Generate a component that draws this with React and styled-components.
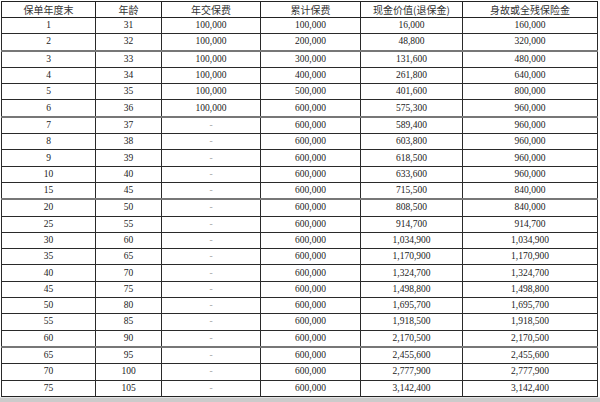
import React from "react";
import styled, { createGlobalStyle } from "styled-components";

const GlobalStyle = createGlobalStyle`
  html, body {
    margin: 0;
    padding: 0;
    background: #fff;
  }
`;

const rows = [
  [1, 31, "100,000", "100,000", "16,000", "160,000"],
  [2, 32, "100,000", "200,000", "48,800", "320,000"],
  [3, 33, "100,000", "300,000", "131,600", "480,000"],
  [4, 34, "100,000", "400,000", "261,800", "640,000"],
  [5, 35, "100,000", "500,000", "401,600", "800,000"],
  [6, 36, "100,000", "600,000", "575,300", "960,000"],
  [7, 37, "-", "600,000", "589,400", "960,000"],
  [8, 38, "-", "600,000", "603,800", "960,000"],
  [9, 39, "-", "600,000", "618,500", "960,000"],
  [10, 40, "-", "600,000", "633,600", "960,000"],
  [15, 45, "-", "600,000", "715,500", "840,000"],
  [20, 50, "-", "600,000", "808,500", "840,000"],
  [25, 55, "-", "600,000", "914,700", "914,700"],
  [30, 60, "-", "600,000", "1,034,900", "1,034,900"],
  [35, 65, "-", "600,000", "1,170,900", "1,170,900"],
  [40, 70, "-", "600,000", "1,324,700", "1,324,700"],
  [45, 75, "-", "600,000", "1,498,800", "1,498,800"],
  [50, 80, "-", "600,000", "1,695,700", "1,695,700"],
  [55, 85, "-", "600,000", "1,918,500", "1,918,500"],
  [60, 90, "-", "600,000", "2,170,500", "2,170,500"],
  [65, 95, "-", "600,000", "2,455,600", "2,455,600"],
  [70, 100, "-", "600,000", "2,777,900", "2,777,900"],
  [75, 105, "-", "600,000", "3,142,400", "3,142,400"],
];

// rows whose top line looks heavier in the scan
const heavyRows = [3, 7, 20, 65];

const headers = ["保单年度末", "年龄", "年交保费", "累计保费", "现金价值(退保金)", "身故或全残保险金"];
const widths = [94, 66, 99, 100, 102, 135];

const Page = styled.div`
  width: 600px;
  height: 402px;
  box-sizing: border-box;
  padding: 1px 3px 0 1px;
  background: linear-gradient(#fff 0, #fff 397px, #cbcbcb 398px);
`;

const Table = styled.table`
  width: 596px;
  height: 396px;
  table-layout: fixed;
  border-collapse: collapse;
  background: #fff;
  font-family: "Liberation Serif", "Noto Sans CJK SC", serif;
  color: #222;
  border: 1px solid #222;
`;

const HeadCell = styled.th`
  height: 15px;
  padding: 0;
  border: 1px solid #222;
  font-weight: normal;
  font-size: 10px;
  line-height: 15px;
  text-align: center;
  font-family: "Noto Sans CJK SC", sans-serif;
  color: #333;
`;

const Row = styled.tr`
  td {
    border-top: ${(p) => (p.$heavy ? "2px solid #777" : "1px solid #2a2a2a")};
  }
`;

const Cell = styled.td`
  height: 15px;
  padding: 0;
  border-left: 1px solid #2a2a2a;
  border-right: 1px solid #2a2a2a;
  font-size: 9.5px;
  line-height: 15px;
  text-align: center;
  color: ${(p) => (p.$dash ? "#aaa" : "#222")};
`;

export default function App() {
  return (
    <>
      <GlobalStyle />
      <Page>
        <Table>
          <colgroup>
            {widths.map((w, i) => (
              <col key={i} style={{ width: w }} />
            ))}
          </colgroup>
          <thead>
            <tr>
              {headers.map((h) => (
                <HeadCell key={h}>{h}</HeadCell>
              ))}
            </tr>
          </thead>
          <tbody>
            {rows.map((r) => (
              <Row key={r[0]} $heavy={heavyRows.includes(r[0])}>
                {r.map((v, i) => (
                  <Cell key={i} $dash={v === "-"}>
                    {v}
                  </Cell>
                ))}
              </Row>
            ))}
          </tbody>
        </Table>
      </Page>
    </>
  );
}
